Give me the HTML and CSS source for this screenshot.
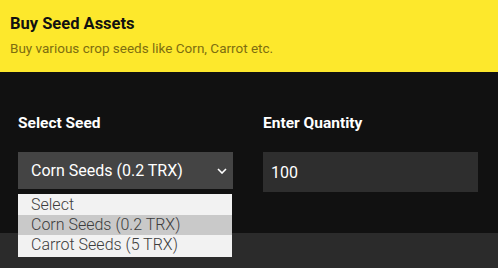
FILE: index.html
```html
<!DOCTYPE html>
<html lang="en">
<head>
    <meta charset="UTF-8">
    <meta name="viewport" content="width=device-width, initial-scale=1.0">
    <title>Buy Seed Assets</title>
    <link rel="stylesheet" href="styles.css">
</head>
<body>

<div class="header">
    <h2>Buy Seed Assets</h2>
    <p>Buy various crop seeds like Corn, Carrot etc.</p>
</div>

<div class="form">
    <div class="form-group">
        <label for="seed">Select Seed</label>
        <div class="select-wrap">
            <div class="select" id="seed">
                <span>Corn Seeds (0.2 TRX)</span>
                <svg class="chevron" width="10" height="6" viewBox="0 0 10 6"><path d="M1 1l4 4 4-4" fill="none" stroke="#fff" stroke-width="1.6"/></svg>
            </div>
            <ul class="options">
                <li>Select</li>
                <li class="active">Corn Seeds (0.2 TRX)</li>
                <li>Carrot Seeds (5 TRX)</li>
            </ul>
        </div>
    </div>

    <div class="form-group">
        <label for="qty">Enter Quantity</label>
        <input type="text" id="qty" value="100">
    </div>
</div>

<div class="footer"></div>

</body>
</html>
```

FILE: styles.css
```css
body {
    font-family: Roboto, Arial, sans-serif;
    background-color: #111;
    margin: 0;
    color: #fff;
}
.header {
    background-color: #fde82c;
    height: 72px;
    padding: 14px 10px 0;
    box-sizing: border-box;
}
.header h2 {
    margin: 0;
    font-size: 16.5px;
    font-weight: bold;
    color: #111;
    line-height: 20px;
}
.header p {
    margin: 6px 0 0;
    font-size: 13.5px;
    color: #7d6e10;
}
.form {
    display: flex;
    gap: 30px;
    padding: 41px 20px 0 18px;
    height: 161px;
    box-sizing: border-box;
}
.form-group {
    width: 215px;
}
label {
    display: block;
    font-weight: bold;
    font-size: 15.5px;
    line-height: 20px;
    margin-bottom: 19px;
}
.select-wrap {
    position: relative;
}
.select {
    display: flex;
    align-items: center;
    justify-content: space-between;
    height: 37px;
    padding: 0 4px 0 13px;
    background-color: #444;
    font-size: 16px;
}
.chevron {
    margin-right: 2px;
}
.options {
    position: absolute;
    top: 42px;
    left: 0;
    width: 214px;
    margin: 0;
    padding: 1px 0 2px;
    list-style: none;
    background-color: #f2f2f2;
    color: #3c3c3c;
    font-size: 16px;
    font-weight: 300;
    z-index: 2;
}
.options li {
    padding: 0 13px;
    line-height: 20px;
}
.options li.active {
    background-color: #c9c9c9;
}
input[type="text"] {
    width: 100%;
    height: 40px;
    box-sizing: border-box;
    padding: 0 8px;
    border: none;
    background-color: #2e2e2e;
    color: #fff;
    font-family: Roboto, Arial, sans-serif;
    font-size: 16px;
}
.footer {
    background-color: #2b2b2b;
    height: 35px;
}
```
